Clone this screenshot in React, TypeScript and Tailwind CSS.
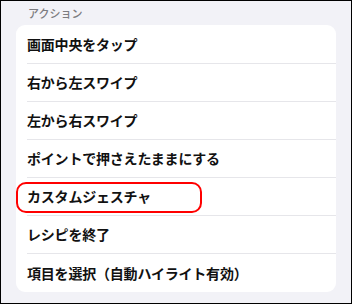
import React from 'react';

const items = [
  '画面中央をタップ',
  '右から左スワイプ',
  '左から右スワイプ',
  'ポイントで押さえたままにする',
  'カスタムジェスチャ',
  'レシピを終了',
  '項目を選択（自動ハイライト有効）',
];

const font = { fontFamily: '"Noto Sans CJK JP", "Noto Sans", sans-serif' };

const App: React.FC = () => {
  return (
    <div className="w-[352px] h-[304px] border border-black bg-[#f2f2f7] overflow-hidden" style={font}>
      <div className="h-[24px] pl-[27px] pt-[4px] text-[11px] leading-[16px] font-medium text-[#7c7c80]">アクション</div>
      <div className="mx-[15px] bg-white rounded-[9px] pl-[11px]">
        {items.map((label, i) => (
          <div
            key={label}
            className={`relative flex items-center ${i === items.length - 1 ? 'h-[39px]' : 'h-[38px]'} ${i > 0 ? 'border-t border-[#e6e6ea]' : ''}`}
          >
            <span className="text-[14px] font-semibold text-[#111] tracking-[-0.2px]">{label}</span>
            {label === 'カスタムジェスチャ' && (
              <div className="absolute left-[-11px] top-[4px] w-[186px] h-[31px] border-[2.5px] border-[#f00] rounded-[10px]" />
            )}
          </div>
        ))}
      </div>
    </div>
  );
};

export default App;
